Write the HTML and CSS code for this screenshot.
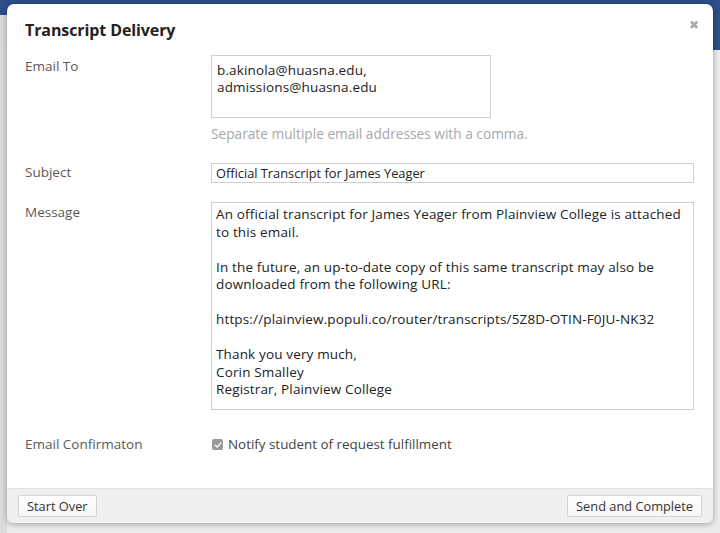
FILE: index.html
```html
<!DOCTYPE html>
<html lang="en">
<head>
<meta charset="utf-8">
<title>Transcript Delivery</title>
<link rel="stylesheet" href="styles.css">
</head>
<body>
<div class="page">
  <header class="topbar"><div class="topbar-left"></div></header>
  <div class="page-body">
    <div class="side"></div>
    <div class="content"></div>
  </div>
</div>

<div class="modal">
  <div class="modal-main">
    <div class="modal-head">
      <h1 class="modal-title">Transcript Delivery</h1>
      <span class="close">&#x2716;</span>
    </div>

    <div class="row row-email">
      <div class="label">Email To</div>
      <div class="field-col">
        <div class="box box-email">b.akinola@huasna.edu,
admissions@huasna.edu</div>
        <div class="help">Separate multiple email addresses with a comma.</div>
      </div>
    </div>

    <div class="row row-subject">
      <div class="label">Subject</div>
      <div class="field-col">
        <div class="box box-subject">Official Transcript for James Yeager</div>
      </div>
    </div>

    <div class="row row-message">
      <div class="label">Message</div>
      <div class="field-col">
        <div class="box box-message">An official transcript for James Yeager from Plainview College is attached
to this email.

In the future, an up-to-date copy of this same transcript may also be
downloaded from the following URL:

https://plainview.populi.co/router/transcripts/5Z8D-OTIN-F0JU-NK32

Thank you very much,
Corin Smalley
Registrar, Plainview College</div>
      </div>
    </div>

    <div class="row row-confirm">
      <div class="label">Email Confirmaton</div>
      <div class="field-col">
        <label class="check">
          <span class="checkbox"><svg viewBox="0 0 10 10" width="10" height="10"><path d="M2.3 5.2 L4.2 7.1 L7.8 2.9" fill="none" stroke="#fff" stroke-width="1.4" stroke-linecap="round" stroke-linejoin="round"/></svg></span>
          <span>Notify student of request fulfillment</span>
        </label>
      </div>
    </div>
  </div>

  <div class="modal-foot">
    <button class="btn">Start Over</button>
    <button class="btn">Send and Complete</button>
  </div>
</div>
</body>
</html>
```

FILE: styles.css
```css
* { box-sizing: border-box; }

html, body {
  margin: 0;
  padding: 0;
  width: 720px;
  height: 533px;
  overflow: hidden;
  font-family: "Open Sans", "Liberation Sans", sans-serif;
  background: #e4e5e7;
}

.page {
  display: flex;
  flex-direction: column;
  height: 533px;
}

.topbar {
  height: 50px;
  background: #2c4f8b;
  display: flex;
}

.topbar-left {
  width: 7px;
  margin-top: 15px;
  background: #d9dadc;
}

.page-body {
  flex: 1;
  display: flex;
}

.side {
  width: 7px;
  background: #dcdcde;
}

.content {
  flex: 1;
  background: #ececed;
}

.modal {
  position: absolute;
  left: 7px;
  top: 4px;
  width: 706px;
  height: 519px;
  background: #fff;
  border-radius: 7px;
  box-shadow: 0 1px 6px rgba(0, 0, 0, 0.35);
  display: flex;
  flex-direction: column;
  overflow: hidden;
}

.modal-main {
  flex: 1;
  padding: 16px 19px 0 18px;
}

.modal-head {
  display: flex;
  justify-content: space-between;
  align-items: center;
  height: 20px;
  margin-bottom: 15px;
}

.modal-title {
  margin: 0;
  font-size: 16px;
  line-height: 20px;
  font-weight: 700;
  color: #222;
  letter-spacing: -0.1px;
}

.close {
  font-size: 12px;
  color: #a9a9a9;
  margin-right: -5px;
  margin-top: -11px;
}

.row {
  display: grid;
  grid-template-columns: 186px 1fr;
}

.label {
  font-size: 13.5px;
  line-height: 17px;
  color: #5a5a5a;
}

.box {
  border: 1px solid #cfcfcf;
  color: #222;
  white-space: pre-line;
  background: #fff;
}

.row-email .label { padding-top: 3px; }

.box-email {
  width: 280px;
  height: 63px;
  padding: 6px 5px;
  font-size: 13.5px;
  letter-spacing: 0.15px;
  line-height: 17px;
}

.help {
  margin-top: 7px;
  font-size: 13.7px;
  line-height: 17px;
  color: #a8a8a8;
}

.row-subject {
  margin-top: 21px;
}

.row-subject .label { padding-top: 1px; }

.box-subject {
  height: 20px;
  padding: 0 4px;
  font-size: 12.8px;
  line-height: 18px;
}

.row-message {
  margin-top: 19px;
}

.row-message .label { padding-top: 2px; }

.box-message {
  height: 208px;
  padding: 3px 4px;
  font-size: 13.5px;
  letter-spacing: 0.15px;
  line-height: 17.5px;
}

.row-confirm {
  margin-top: 26px;
}

.check {
  display: flex;
  align-items: center;
  gap: 5px;
  font-size: 13.4px;
  line-height: 17px;
  color: #444;
}

.checkbox {
  width: 11px;
  height: 11px;
  background: #9a9a9a;
  border-radius: 2px;
  display: flex;
  align-items: center;
  justify-content: center;
  margin-left: 1px;
}

.modal-foot {
  height: 35px;
  background: #f0f0f0;
  border-top: 1px solid #e2e2e2;
  display: flex;
  justify-content: space-between;
  align-items: center;
  padding: 0 11px;
}

.btn {
  font-family: inherit;
  font-size: 12.8px;
  color: #333;
  height: 22px;
  padding: 0 8px;
  background: linear-gradient(#ffffff, #f6f6f6);
  border: 1px solid #d4d4d4;
  border-radius: 2px;
  line-height: 20px;
}
```
